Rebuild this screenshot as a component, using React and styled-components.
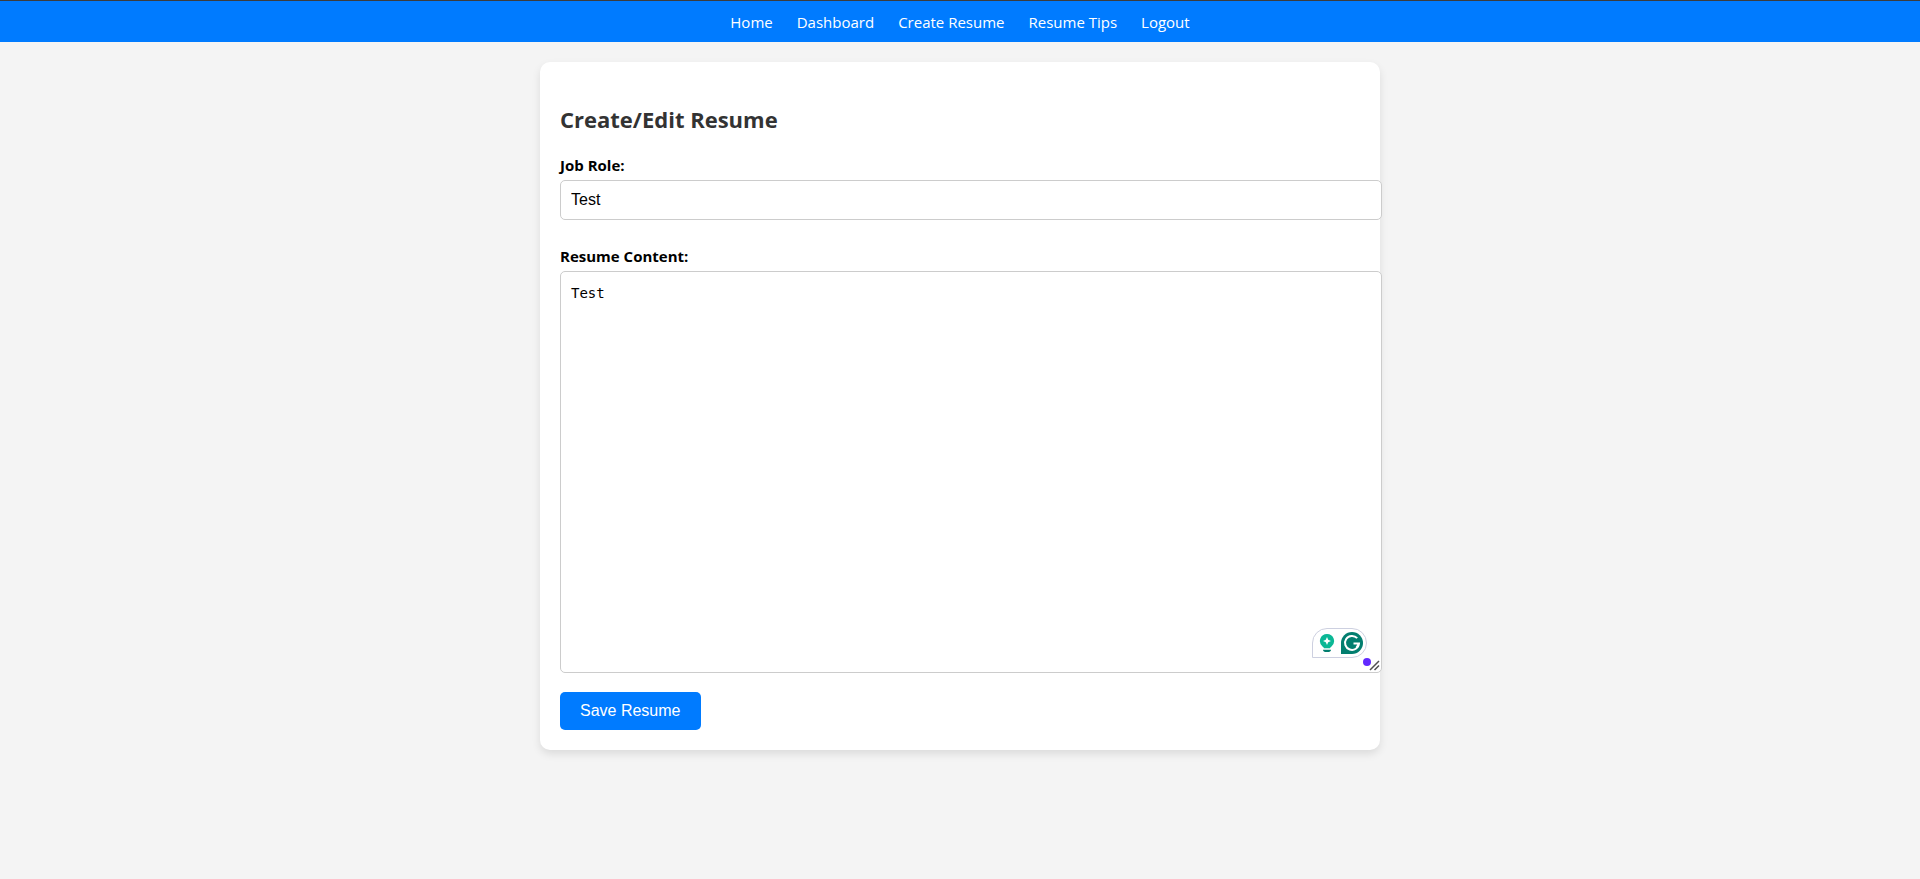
import React, { useState } from "react";
import styled, { createGlobalStyle } from "styled-components";

const GlobalStyle = createGlobalStyle`
  body {
    margin: 0;
    background: #f4f4f4;
    color: #000;
    font-family: "Segoe UI", "Open Sans", "Noto Sans", sans-serif;
    font-size: 15px;
    line-height: 21px;
  }
`;

const NavBar = styled.nav`
  display: flex;
  justify-content: center;
  gap: 24px;
  padding: 11px 10px 9px;
  border-top: 1px solid #3c3c3c;
  background: #007bff;
`;

const NavLink = styled.a`
  color: #fff;
  text-decoration: none;
`;

const Card = styled.main`
  max-width: 800px;
  margin: 20px auto;
  padding: 20px;
  border-radius: 10px;
  background: #fff;
  box-shadow: 0 4px 8px rgba(0, 0, 0, 0.1);
`;

const Title = styled.h2`
  margin: 21px 0 20px;
  color: #333;
  font-size: 22px;
  line-height: 32px;
`;

const Form = styled.form`
  display: flex;
  flex-direction: column;
  align-items: flex-start;
`;

const Field = styled.div`
  display: flex;
  flex-direction: column;
  width: 100%;
  margin-bottom: ${(p) => p.$gap}px;
`;

const Label = styled.label`
  margin-bottom: 4px;
  font-weight: 700;
`;

const TextInput = styled.input`
  width: 100%;
  height: 18px;
  padding: 10px;
  border: 1px solid #ccc;
  border-radius: 5px;
  background: #fff;
  color: #000;
  font: 16px "Liberation Sans", Arial, sans-serif;
`;

const EditorBox = styled.div`
  position: relative;
  width: 100%;
`;

const Editor = styled.textarea`
  display: block;
  width: 100%;
  height: 380px;
  padding: 10px;
  border: 1px solid #ccc;
  border-radius: 5px;
  background: #fff;
  color: #000;
  font: 14px/22px "DejaVu Sans Mono", monospace;
  resize: vertical;

  &::-webkit-resizer {
    background: transparent;
  }
`;

const Assistant = styled.div`
  position: absolute;
  right: -7px;
  bottom: 15px;
  display: flex;
  align-items: center;
  gap: 6px;
  padding: 3px 3px 3px 6px;
  border: 1px solid #cdd0e0;
  border-radius: 15px 15px 15px 0;
  background: #fff;
`;

const StatusDot = styled.span`
  position: absolute;
  right: -11px;
  bottom: 7px;
  width: 8px;
  height: 8px;
  border-radius: 50%;
  background: #6229ff;
`;

const Grip = styled.svg`
  position: absolute;
  right: -20px;
  bottom: 2px;
  pointer-events: none;
`;

const SaveButton = styled.button`
  padding: 10px 20px;
  border: 0;
  border-radius: 5px;
  background: #007bff;
  color: #fff;
  font: 16px/18px "Liberation Sans", Arial, sans-serif;
  cursor: pointer;
`;

const links = ["Home", "Dashboard", "Create Resume", "Resume Tips", "Logout"];

function BulbIcon() {
  return (
    <svg width="16" height="20" viewBox="0 0 16 20" aria-hidden="true">
      <path
        d="M8 1a7 7 0 0 0-4.500 12.400c.8.500 1.200 1 1.500 1.800h6c.3-.8.7-1.300 1.500-1.800A7 7 0 0 0 8 1z"
        fill="#0bb795"
      />
      <path d="M8 4l1.200 2.800L12 8 9.200 9.200 8 12 6.800 9.200 4 8l2.800-1.200z" fill="#fff" />
      <path d="M4 16.800h8c0 1.300-1 2.200-2.200 2.200H6.200C5 19 4 18.100 4 16.800z" fill="#027e6f" />
    </svg>
  );
}

function CheckerIcon() {
  return (
    <svg width="22" height="22" viewBox="0 0 22 22" aria-hidden="true">
      <path d="M11 0a11 11 0 1 1 0 22H0V11A11 11 0 0 1 11 0z" fill="#027e6f" />
      <path
        d="M16.200 6.200A7 7 0 1 0 18 11.500H12.500M18 11.500l-2.400 4"
        fill="none"
        stroke="#fff"
        strokeWidth="2"
      />
    </svg>
  );
}

export default function App() {
  const [role, setRole] = useState("Test");
  const [content, setContent] = useState("Test");

  return (
    <>
      <GlobalStyle />
      <NavBar>
        {links.map((name) => (
          <NavLink key={name} href="#">
            {name}
          </NavLink>
        ))}
      </NavBar>
      <Card>
        <Title>Create/Edit Resume</Title>
        <Form onSubmit={(e) => e.preventDefault()}>
          <Field $gap={26}>
            <Label htmlFor="role">Job Role:</Label>
            <TextInput
              id="role"
              type="text"
              value={role}
              onChange={(e) => setRole(e.target.value)}
            />
          </Field>
          <Field $gap={19}>
            <Label htmlFor="content">Resume Content:</Label>
            <EditorBox>
              <Editor
                id="content"
                spellCheck={false}
                value={content}
                onChange={(e) => setContent(e.target.value)}
              />
              <Assistant>
                <BulbIcon />
                <CheckerIcon />
              </Assistant>
              <StatusDot />
              <Grip width="11" height="11" viewBox="0 0 11 11" aria-hidden="true">
                <path d="M1 10l9-9M5.500 10l4.500-4.500" stroke="#505050" strokeWidth="1.500" />
              </Grip>
            </EditorBox>
          </Field>
          <SaveButton type="submit">Save Resume</SaveButton>
        </Form>
      </Card>
    </>
  );
}
